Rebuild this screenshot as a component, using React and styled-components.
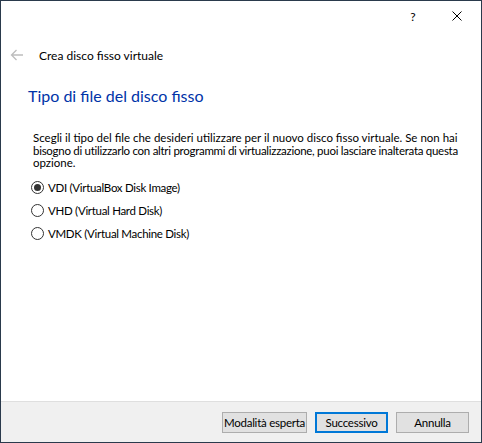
import React from 'react';
import styled, { createGlobalStyle } from 'styled-components';

const Global = createGlobalStyle`
  html, body {
    margin: 0;
    padding: 0;
    background: #fff;
  }
  body {
    font-family: Lato, 'Noto Sans', 'Liberation Sans', sans-serif;
    font-size: 12px;
    color: #000;
  }
`;

const Window = styled.div`
  box-sizing: border-box;
  width: 482px;
  height: 443px;
  border: 1px solid #2a3a4c;
  background: #fff;
  display: flex;
  flex-direction: column;
`;

const TitleBar = styled.div`
  height: 30px;
  display: flex;
  justify-content: flex-end;
  align-items: center;
  padding-right: 2px;
`;

const CaptionButton = styled.div`
  width: 44px;
  height: 30px;
  display: flex;
  align-items: center;
  justify-content: center;
  font-size: 12px;
  color: #000;
`;

const Header = styled.div`
  height: 48px;
  display: flex;
  align-items: center;
  padding-left: 9px;
  gap: 15px;
`;

const Title = styled.span`
  font-size: 12px;
`;

const Content = styled.div`
  flex: 1;
  padding: 0 10px 0 32px;
`;

const Heading = styled.h1`
  margin: 6px 0 0 -5px;
  font-size: 16px;
  line-height: 22px;
  font-weight: normal;
  color: #0033a8;
`;

const Paragraph = styled.p`
  margin: 25px 0 0;
  font-size: 11.5px;
  line-height: 12.5px;
`;

const Line = styled.span`
  display: block;
  white-space: nowrap;
  letter-spacing: ${p => p.spacing || 0}px;
`;

const Options = styled.div`
  margin-top: 6px;
  display: flex;
  flex-direction: column;
  margin-left: -2px;
`;

const Option = styled.label`
  height: 23px;
  display: flex;
  align-items: center;
  gap: 4px;
  font-size: 11.5px;
  letter-spacing: -0.3px;
`;

const Radio = styled.span`
  box-sizing: border-box;
  width: 13px;
  height: 13px;
  border: 1px solid #333;
  border-radius: 50%;
  display: flex;
  align-items: center;
  justify-content: center;
  &::after {
    content: '';
    width: 7px;
    height: 7px;
    border-radius: 50%;
    background: ${p => (p.checked ? '#333' : 'transparent')};
  }
`;

const Footer = styled.div`
  height: 41px;
  box-sizing: border-box;
  border-top: 1px solid #dfdfdf;
  background: #f0f0f0;
  display: flex;
  justify-content: flex-end;
  align-items: center;
  gap: 8px;
  padding: 0 12px 0 0;
`;

const Button = styled.button`
  box-sizing: border-box;
  height: 21px;
  width: ${p => p.width || 73}px;
  padding: 0;
  white-space: nowrap;
  font-family: inherit;
  font-size: 11.5px;
  letter-spacing: -0.25px;
  color: #000;
  background: #e1e1e1;
  border: ${p => (p.primary ? '2px solid #0078d7' : '1px solid #adadad')};
`;

const BackArrow = () => (
  <svg width="14" height="12" viewBox="0 0 14 12">
    <path d="M13 6H1.5M6.5 1L1.5 6l5 5" fill="none" stroke="#bdbdbd" strokeWidth="1.3" />
  </svg>
);

const CloseIcon = () => (
  <svg width="10" height="10" viewBox="0 0 10 10">
    <path d="M0.5 0.5l9 9M9.5 0.5l-9 9" stroke="#000" strokeWidth="1" />
  </svg>
);

const options = [
  { label: 'VDI (VirtualBox Disk Image)', checked: true },
  { label: 'VHD (Virtual Hard Disk)' },
  { label: 'VMDK (Virtual Machine Disk)' },
];

const lines = [
  { text: 'Scegli il tipo del file che desideri utilizzare per il nuovo disco fisso virtuale. Se non hai' },
  {
    text: 'bisogno di utilizzarlo con altri programmi di virtualizzazione, puoi lasciare inalterata questa',
    spacing: -0.28,
  },
  { text: 'opzione.' },
];

export default function App() {
  return (
    <>
      <Global />
      <Window>
        <TitleBar>
          <CaptionButton>?</CaptionButton>
          <CaptionButton>
            <CloseIcon />
          </CaptionButton>
        </TitleBar>
        <Header>
          <BackArrow />
          <Title>Crea disco fisso virtuale</Title>
        </Header>
        <Content>
          <Heading>Tipo di file del disco fisso</Heading>
          <Paragraph>
            {lines.map(l => (
              <Line key={l.text} spacing={l.spacing}>
                {l.text}
              </Line>
            ))}
          </Paragraph>
          <Options>
            {options.map(o => (
              <Option key={o.label}>
                <Radio checked={o.checked} />
                {o.label}
              </Option>
            ))}
          </Options>
        </Content>
        <Footer>
          <Button width={85}>Modalità esperta</Button>
          <Button primary>Successivo</Button>
          <Button>Annulla</Button>
        </Footer>
      </Window>
    </>
  );
}
